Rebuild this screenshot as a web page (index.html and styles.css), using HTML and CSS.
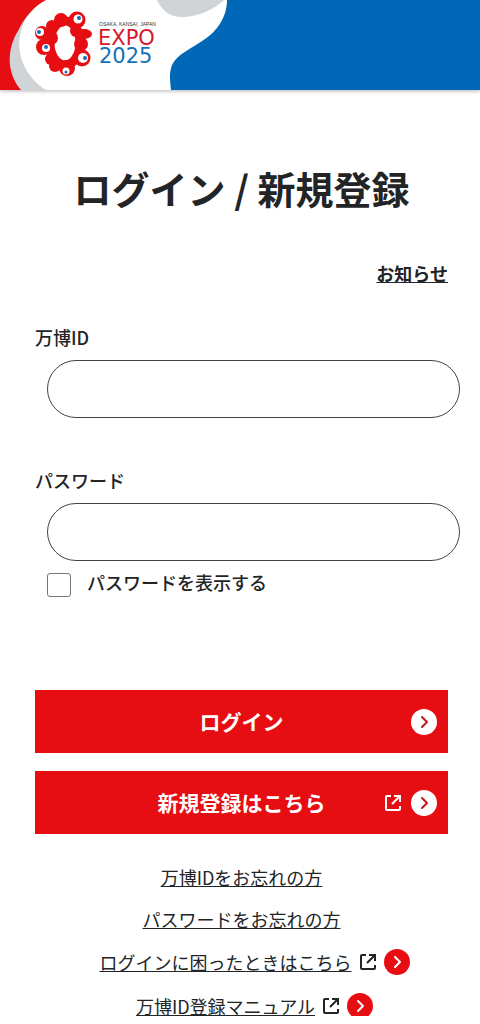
FILE: index.html
```html
<!DOCTYPE html>
<html lang="ja">
<head>
    <meta charset="UTF-8">
    <meta name="viewport" content="width=device-width, initial-scale=1.0">
    <title>ログイン / 新規登録</title>
    <link rel="stylesheet" href="styles.css">
</head>
<body>
    <svg class="sprite" aria-hidden="true">
        <symbol id="icon-external" viewBox="0 0 18 18">
            <path d="M7 2H3Q2 2 2 3V15Q2 16 3 16H15Q16 16 16 15V12" fill="none" stroke="currentColor" stroke-width="2"/>
            <path d="M8 10L16 2M10 2H16V8" fill="none" stroke="currentColor" stroke-width="2"/>
        </symbol>
        <symbol id="icon-arrow" viewBox="0 0 26 26">
            <circle class="disc" cx="13" cy="13" r="13"/>
            <path d="M11 8L16 13L11 18" fill="none" stroke-width="2" stroke-linecap="round" stroke-linejoin="round"/>
        </symbol>
    </svg>

    <header class="header">
        <svg class="header-art" viewBox="0 0 240 90" role="img" aria-label="EXPO 2025">
            <path d="M0 0H227C227 17 217 31 205 39C191 49 177 54 172 65C169 73 170 80 171 90H0Z" fill="#fff"/>
            <path d="M157 0C162 11 170 17 182 17C198 17 215 9 224 0Z" fill="#d0d4d6"/>
            <path d="M0 0H46C12 18 9 66 46 90H0Z" fill="#d0d4d6"/>
            <path d="M0 0H46C34 6 24 18 18 31C8 47 5 71 21 90H0Z" fill="#e60e13"/>
            <ellipse cx="65" cy="43" rx="15" ry="22" fill="none" stroke="#e60e13" stroke-width="9"/>
            <g fill="#e60e13">
                <circle cx="61" cy="20" r="7"/>
                <circle cx="52" cy="26" r="6"/>
                <circle cx="77" cy="20" r="8.500"/>
                <ellipse cx="84" cy="34" rx="8" ry="5"/>
                <circle cx="76" cy="31" r="6"/>
                <circle cx="81" cy="44" r="7"/>
                <circle cx="82" cy="58" r="8.500"/>
                <circle cx="67" cy="68" r="8"/>
                <circle cx="55" cy="66" r="6"/>
                <circle cx="51" cy="59" r="6"/>
                <circle cx="44" cy="47" r="8"/>
                <circle cx="42" cy="33" r="7"/>
                <circle cx="51" cy="38" r="7"/>
            </g>
            <g fill="#fff">
                <circle cx="78" cy="19" r="4.500"/>
                <circle cx="40" cy="32" r="4"/>
                <circle cx="46" cy="48" r="4"/>
                <circle cx="83" cy="58" r="5"/>
                <circle cx="66" cy="71" r="3.500"/>
            </g>
            <g fill="#1868b5">
                <circle cx="79" cy="18" r="2"/>
                <circle cx="39" cy="32" r="2"/>
                <circle cx="46" cy="47" r="2"/>
                <circle cx="85" cy="58" r="2"/>
                <circle cx="66" cy="72" r="1.500"/>
            </g>
            <text class="logo-place" x="99" y="26">OSAKA, KANSAI, JAPAN</text>
            <text class="logo-expo" x="98" y="45">EXPO</text>
            <text class="logo-year" x="99" y="63">2025</text>
        </svg>
    </header>

    <main class="main">
        <h1>ログイン / 新規登録</h1>
        <div class="notice">
            <a href="#">お知らせ</a>
        </div>

        <form class="login-form">
            <div class="field">
                <label for="expo-id">万博ID</label>
                <input type="text" id="expo-id" autocomplete="username">
            </div>
            <div class="field">
                <label for="password">パスワード</label>
                <input type="password" id="password" autocomplete="current-password">
            </div>
            <div class="show-password">
                <input type="checkbox" id="show-password">
                <label for="show-password">パスワードを表示する</label>
            </div>

            <div class="buttons">
                <button type="submit" class="btn">
                    <span class="btn-label">ログイン</span>
                    <span class="btn-icons">
                        <svg class="arrow arrow-white"><use href="#icon-arrow"/></svg>
                    </span>
                </button>
                <a href="#" class="btn">
                    <span class="btn-label">新規登録はこちら</span>
                    <span class="btn-icons">
                        <svg class="external"><use href="#icon-external"/></svg>
                        <svg class="arrow arrow-white"><use href="#icon-arrow"/></svg>
                    </span>
                </a>
            </div>
        </form>

        <ul class="links">
            <li><a href="#">万博IDをお忘れの方</a></li>
            <li><a href="#">パスワードをお忘れの方</a></li>
            <li class="outside">
                <a href="#">ログインに困ったときはこちら</a>
                <svg class="external"><use href="#icon-external"/></svg>
                <svg class="arrow"><use href="#icon-arrow"/></svg>
            </li>
            <li class="outside">
                <a href="#">万博ID登録マニュアル</a>
                <svg class="external"><use href="#icon-external"/></svg>
                <svg class="arrow"><use href="#icon-arrow"/></svg>
            </li>
        </ul>
    </main>
</body>
</html>
```

FILE: styles.css
```css
* {
    box-sizing: border-box;
}
body {
    display: flex;
    flex-direction: column;
    height: 100vh;
    margin: 0;
    padding-bottom: 8px;
    overflow: hidden;
    font-family: "Noto Sans CJK JP", sans-serif;
    font-size: 18px;
    line-height: 26px;
    color: #222426;
    background: #fff;
}
a {
    color: inherit;
    text-underline-offset: 1px;
}
.sprite {
    display: none;
}

/* header */
.header {
    flex: none;
    background: #0068b7;
    box-shadow: 0 1px 4px rgba(0,0,0,0.3);
}
.header-art {
    display: block;
    width: 240px;
    height: 90px;
}
.logo-place {
    font-family: "Liberation Sans", sans-serif;
    font-size: 5px;
    fill: #333;
}
.logo-expo,
.logo-year {
    font-family: "DejaVu Sans", sans-serif;
    font-size: 21px;
    fill: #d7182a;
}
.logo-year {
    fill: #1471b8;
}

/* login form */
.main {
    flex: 1;
    min-height: 0;
    padding: 70px 32px 0 35px;
    overflow: hidden;
}
h1 {
    margin: 0 0 44px;
    font-size: 38px;
    font-weight: 700;
    line-height: 56px;
    text-align: center;
}
.notice {
    margin-bottom: 38px;
    font-weight: 700;
    text-align: right;
}
.field {
    display: flex;
    flex-direction: column;
    gap: 10px;
    margin-bottom: 49px;
}
.field label,
.show-password label {
    font-weight: 500;
}
.field input {
    width: 100%;
    height: 58px;
    margin: 0 0 0 12px;
    padding: 0 24px;
    border: 1px solid #444;
    border-radius: 29px;
    background: #fff;
    font: inherit;
}
.show-password {
    display: flex;
    gap: 16px;
    margin: -37px 0 93px 12px;
}
.show-password input {
    appearance: none;
    width: 24px;
    height: 24px;
    margin: 0;
    border: 1px solid #777;
    border-radius: 3px;
    background: #fff;
}
.show-password input:checked {
    background: #0068b7;
}
.show-password label {
    line-height: 18px;
}

/* buttons */
.buttons {
    display: flex;
    flex-direction: column;
    gap: 18px;
}
.btn {
    display: grid;
    grid-template-columns: 1fr auto 1fr;
    align-items: center;
    width: 100%;
    min-height: 63px;
    padding: 0 11px;
    border: none;
    background: #e60e13;
    color: #fff;
    font: inherit;
    font-size: 21px;
    font-weight: 700;
    text-decoration: none;
    cursor: pointer;
}
.btn-label {
    grid-column: 2;
    padding-bottom: 2px;
}
.btn-icons {
    display: flex;
    align-items: center;
    justify-content: flex-end;
    gap: 9px;
}
.external {
    width: 18px;
    height: 18px;
}
.arrow {
    width: 26px;
    height: 26px;
    fill: #e60e13;
    stroke: #fff;
}
.arrow-white {
    fill: #fff;
    stroke: #c8161d;
}
.disc {
    stroke: none;
}

/* links */
.links {
    display: flex;
    flex-direction: column;
    align-items: center;
    gap: 16px;
    margin: 30px 0 0;
    padding: 0;
    list-style: none;
}
.outside {
    display: flex;
    align-items: center;
    gap: 7px;
    min-height: 28px;
    padding-left: 26px;
}
```
